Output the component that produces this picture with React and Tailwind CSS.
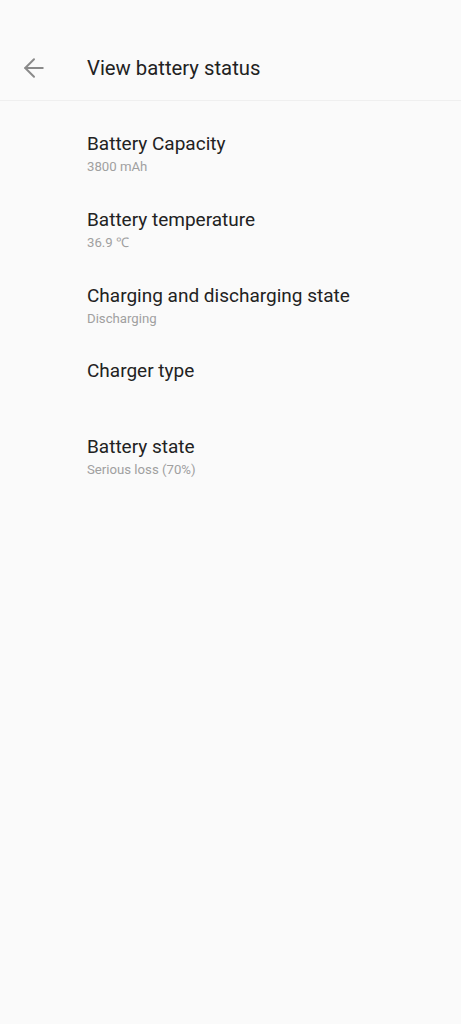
import { ArrowLeft } from "lucide-react"

const rows = [
  { title: "Battery Capacity", value: "3800 mAh" },
  { title: "Battery temperature", value: "36.9 ℃" },
  { title: "Charging and discharging state", value: "Discharging" },
  { title: "Charger type", value: "" },
  { title: "Battery state", value: "Serious loss (70%)" },
]

const App = () => {
  return (
    <div className="w-full min-h-screen bg-[#fafafa] font-['Roboto',sans-serif]">
      <div className="h-[101px] pt-[47px] flex items-start border-b border-[#efefef]">
        <button className="w-[87px] h-[42px] flex items-center pl-[19px] text-[#8a8a8a]" aria-label="Back">
          <ArrowLeft className="w-[30px] h-[30px]" strokeWidth={1.6} />
        </button>
        <h1 className="h-[42px] leading-[42px] text-[20.3px] text-[#222]">View battery status</h1>
      </div>

      <div className="pt-[13px]">
        {rows.map((row) => (
          <div key={row.title} className="h-[75.75px] pl-[87px] pt-[18px]">
            <p className="text-[19px] leading-[24px] text-[#222]">{row.title}</p>
            <p className="mt-[2px] text-[13.2px] leading-[18px] text-[#a0a0a0]">{row.value}</p>
          </div>
        ))}
      </div>
    </div>
  )
}

export default App
